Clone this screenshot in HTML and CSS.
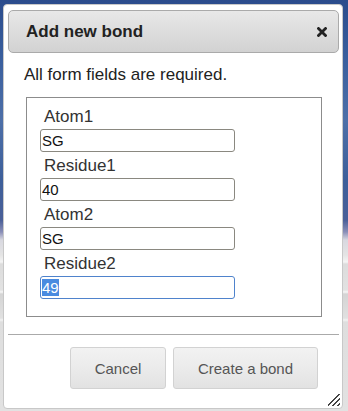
FILE: index.html
```html
<!DOCTYPE html>
<html lang="en">
<head>
    <meta charset="UTF-8">
    <title>Add new bond</title>
    <link rel="stylesheet" href="styles.css">
</head>
<body>
    <div class="dialog">
        <div class="titlebar">
            <span class="title">Add new bond</span>
            <svg class="close" width="10" height="10" viewBox="0 0 10 10">
                <path d="M1.5 1.5 L8.5 8.5 M8.5 1.5 L1.5 8.5" stroke="#222" stroke-width="2.8" stroke-linecap="square"/>
            </svg>
        </div>
        <div class="content">
            <p class="note">All form fields are required.</p>
            <div class="fields">
                <label class="label">Atom1</label>
                <div class="field">SG</div>
                <label class="label">Residue1</label>
                <div class="field">40</div>
                <label class="label">Atom2</label>
                <div class="field">SG</div>
                <label class="label">Residue2</label>
                <div class="field focused"><span class="selected">49</span></div>
            </div>
        </div>
        <div class="buttons">
            <button class="btn cancel">Cancel</button>
            <button class="btn create">Create a bond</button>
        </div>
        <span class="resize"></span>
    </div>
</body>
</html>
```

FILE: styles.css
```css
* {
    margin: 0;
    padding: 0;
    box-sizing: border-box;
    font-family: 'Liberation Sans', Arial, sans-serif;
}

body {
    width: 348px;
    height: 411px;
    overflow: hidden;
    background:
        linear-gradient(to bottom,
            #2b4c8c 0px, #3a5f9e 60px, #4d6fa8 120px, #3d5f9a 180px, #4a5f98 220px,
            #8a8fb8 232px, #d8d8e0 240px, #e4e4e4 255px,
            #f4f4f4 262px, #dcdcdc 264px, #e2e2e2 290px, #f6f6f6 292px, #d4d4d4 294px,
            #e0e0e0 318px, #f2f2f2 320px, #dedede 322px, #e2e2e2 411px);
}

.dialog {
    position: relative;
    width: 340px;
    height: 405px;
    margin: 4px 0 0 3px;
    padding: 5px 3px 0 4px;
    background: #fff;
    border: 1px solid #c8c8c8;
    border-radius: 4px;
}

.titlebar {
    height: 43px;
    display: flex;
    align-items: center;
    justify-content: space-between;
    padding: 0 11px 0 17px;
    border: 1px solid #aaa;
    border-radius: 5px;
    background: linear-gradient(to bottom, #e8e8e8, #d2d2d2);
}

.title {
    font-size: 17px;
    font-weight: bold;
    color: #222;
}

.close {
    display: block;
}

.content {
    padding: 13px 0 0 16px;
}

.note {
    font-size: 17px;
    line-height: 18px;
    color: #222;
}

.fields {
    width: 296px;
    margin: 13px 0 0 2px;
    padding: 5px 0 17px 13px;
    border: 1px solid #8c8c8c;
}

.label {
    display: block;
    padding: 4px 0 2px 4px;
    font-size: 17px;
    line-height: 20px;
    color: #333;
}

.field {
    width: 195px;
    height: 23px;
    padding: 0 1px;
    border: 1px solid #8a8880;
    border-radius: 3px;
    font-size: 15px;
    line-height: 21px;
    color: #111;
}

.field.focused {
    border-color: #4f83cc;
}

.selected {
    background: #4a8be0;
    color: #fff;
}

.buttons {
    display: flex;
    justify-content: flex-end;
    gap: 7px;
    margin-top: 17px;
    padding: 12px 21px 0 0;
    border-top: 1px solid #aaa;
}

.btn {
    height: 42px;
    border: 1px solid #d2d2d2;
    border-radius: 3px;
    background: linear-gradient(to bottom, #f2f2f2 0%, #ebebeb 50%, #e2e2e2 100%);
    font-size: 15px;
    color: #555;
}

.cancel {
    width: 96px;
}

.create {
    width: 145px;
}

.resize {
    position: absolute;
    right: 2px;
    bottom: 2px;
    width: 12px;
    height: 12px;
    background: linear-gradient(135deg,
        transparent 45%, #444 45%, #444 52%, transparent 52%,
        transparent 66%, #444 66%, #444 73%, transparent 73%,
        transparent 86%, #444 86%, #444 93%, transparent 93%);
}
```
